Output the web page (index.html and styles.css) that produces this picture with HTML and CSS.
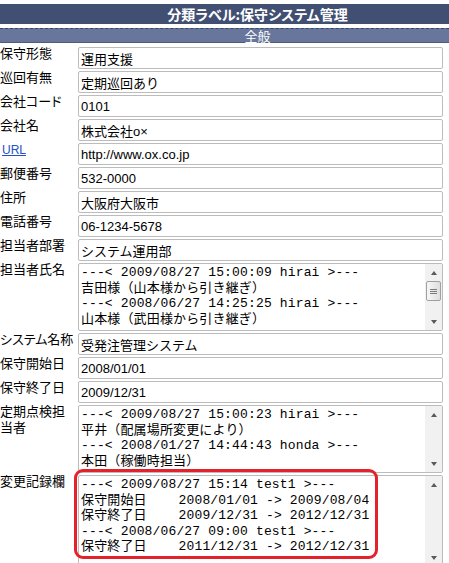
FILE: index.html
```html
<!DOCTYPE html>
<html lang="ja">
<head>
<meta charset="utf-8">
<title>分類ラベル:保守システム管理</title>
<link rel="stylesheet" href="styles.css">
</head>
<body>
<div class="page">
  <h1 class="title">分類ラベル:保守システム管理</h1>
  <h2 class="section">全般</h2>
  <div class="form">
    <div class="row"><div class="label">保守形態</div><input class="field" type="text" value="運用支援" readonly></div>
    <div class="row"><div class="label">巡回有無</div><input class="field" type="text" value="定期巡回あり" readonly></div>
    <div class="row"><div class="label">会社コード</div><input class="field" type="text" value="0101" readonly></div>
    <div class="row"><div class="label">会社名</div><input class="field" type="text" value="株式会社o×" readonly></div>
    <div class="row"><div class="label"><a class="label-link" href="#">URL</a></div><input class="field" type="text" value="http://www.ox.co.jp" readonly></div>
    <div class="row"><div class="label">郵便番号</div><input class="field" type="text" value="532-0000" readonly></div>
    <div class="row"><div class="label">住所</div><input class="field" type="text" value="大阪府大阪市" readonly></div>
    <div class="row"><div class="label">電話番号</div><input class="field" type="text" value="06-1234-5678" readonly></div>
    <div class="row"><div class="label">担当者部署</div><input class="field" type="text" value="システム運用部" readonly></div>
    <div class="row">
      <div class="label">担当者氏名</div>
      <div class="ta">
        <textarea class="ta-text" readonly>---&lt; 2009/08/27 15:00:09 hirai &gt;---
吉田様（山本様から引き継ぎ）
---&lt; 2008/06/27 14:25:25 hirai &gt;---
山本様（武田様から引き継ぎ）</textarea>
        <div class="sb"><span class="sb-btn up"></span><span class="sb-track"><span class="sb-thumb"></span></span><span class="sb-btn down"></span></div>
      </div>
    </div>
    <div class="row"><div class="label">システム名称</div><input class="field" type="text" value="受発注管理システム" readonly></div>
    <div class="row"><div class="label">保守開始日</div><input class="field" type="text" value="2008/01/01" readonly></div>
    <div class="row"><div class="label">保守終了日</div><input class="field" type="text" value="2009/12/31" readonly></div>
    <div class="row">
      <div class="label">定期点検担当者</div>
      <div class="ta">
        <textarea class="ta-text" readonly>---&lt; 2009/08/27 15:00:23 hirai &gt;---
平井（配属場所変更により）
---&lt; 2008/01/27 14:44:43 honda &gt;---
本田（稼働時担当）</textarea>
        <div class="sb"><span class="sb-btn up"></span><span class="sb-track"></span><span class="sb-btn down"></span></div>
      </div>
    </div>
    <div class="row">
      <div class="label">変更記録欄</div>
      <div class="ta ta-tall">
        <textarea class="ta-text" readonly>---&lt; 2009/08/27 15:14 test1 &gt;---
保守開始日    2008/01/01 -&gt; 2009/08/04
保守終了日    2009/12/31 -&gt; 2012/12/31
---&lt; 2008/06/27 09:00 test1 &gt;---
保守終了日    2011/12/31 -&gt; 2012/12/31</textarea>
        <div class="sb"><span class="sb-btn up"></span><span class="sb-track"></span><span class="sb-btn down"></span></div>
        <div class="annot"></div>
      </div>
    </div>
  </div>
</div>
</body>
</html>
```

FILE: styles.css
```css
html {
  overflow: hidden;
}
body {
  margin: 4px 0 0;
  background: #fff;
  color: #000;
  font-family: "Noto Sans CJK JP", sans-serif;
  font-size: 13px;
}
.title {
  margin: 0;
  height: 20px;
  line-height: 20px;
  padding-left: 66px;
  background: #414f72;
  color: #fff;
  font-size: 14px;
  font-weight: bold;
  text-align: center;
  font-feature-settings: "palt";
}
.section {
  margin: 4px 0 0;
  height: 13px;
  line-height: 13px;
  padding-left: 66px;
  border-top: 1px dashed #3a476a;
  border-bottom: 1px solid #4f5c7e;
  background: #67769a;
  color: #fff;
  font-size: 13px;
  font-weight: normal;
  text-align: center;
}
.form {
  display: flex;
  flex-direction: column;
  gap: 2px;
  padding-top: 4px;
}
.row {
  display: grid;
  grid-template-columns: 76px 365px;
  column-gap: 2px;
  align-items: start;
}
.label {
  margin-top: -2px;
  line-height: 16px;
  font-size: 13px;
  font-feature-settings: "palt";
}
.label-link {
  color: #2350c8;
  text-decoration: underline;
  font-family: "Liberation Sans", sans-serif;
  font-size: 12px;
  margin-left: 2px;
}
.field {
  box-sizing: border-box;
  width: 365px;
  height: 22px;
  margin: 0;
  padding: 0 2px;
  border: 1px solid #bcbcbc;
  border-radius: 2px;
  background: #fff;
  color: #000;
  font-family: "Liberation Sans", "Noto Sans CJK JP", sans-serif;
  font-size: 13px;
  outline: none;
}
.ta {
  position: relative;
  box-sizing: border-box;
  display: flex;
  height: 68px;
  border: 1px solid #bcbcbc;
  border-radius: 2px;
  background: #fff;
}
.ta-tall {
  height: 92px;
}
.ta-text {
  flex: 1;
  min-width: 0;
  margin: 0;
  padding: 1px 2px 0;
  border: 0;
  resize: none;
  overflow: hidden;
  white-space: pre;
  background: transparent;
  color: #000;
  font-family: "Liberation Mono", "Noto Sans CJK JP", monospace;
  font-size: 13px;
  line-height: 15.5px;
  letter-spacing: 0.15px;
  outline: none;
}
.sb {
  width: 17px;
  display: flex;
  flex-direction: column;
  background: #f1f1f1;
}
.sb-btn {
  height: 17px;
  flex: none;
  display: flex;
  align-items: center;
  justify-content: center;
}
.sb-btn::before {
  content: "";
  width: 0;
  height: 0;
  border-left: 3.5px solid transparent;
  border-right: 3.5px solid transparent;
}
.up::before {
  border-bottom: 4px solid #5a5a5a;
}
.down::before {
  border-top: 4px solid #5a5a5a;
}
.sb-track {
  flex: 1;
}
.sb-thumb {
  box-sizing: border-box;
  display: flex;
  align-items: center;
  justify-content: center;
  height: 20px;
  margin: 0 1px;
  border: 1px solid #a0a0a0;
  border-radius: 2px;
  background: linear-gradient(to right, #f7f7f7, #dedede);
}
.sb-thumb::before {
  content: "";
  width: 7px;
  height: 5px;
  background: repeating-linear-gradient(to bottom, #7a7a7a 0 1px, transparent 1px 2px);
}
.annot {
  position: absolute;
  left: -5px;
  top: -7px;
  box-sizing: border-box;
  width: 304px;
  height: 90px;
  border: 3px solid #e3222b;
  border-radius: 9px;
  pointer-events: none;
}
```
